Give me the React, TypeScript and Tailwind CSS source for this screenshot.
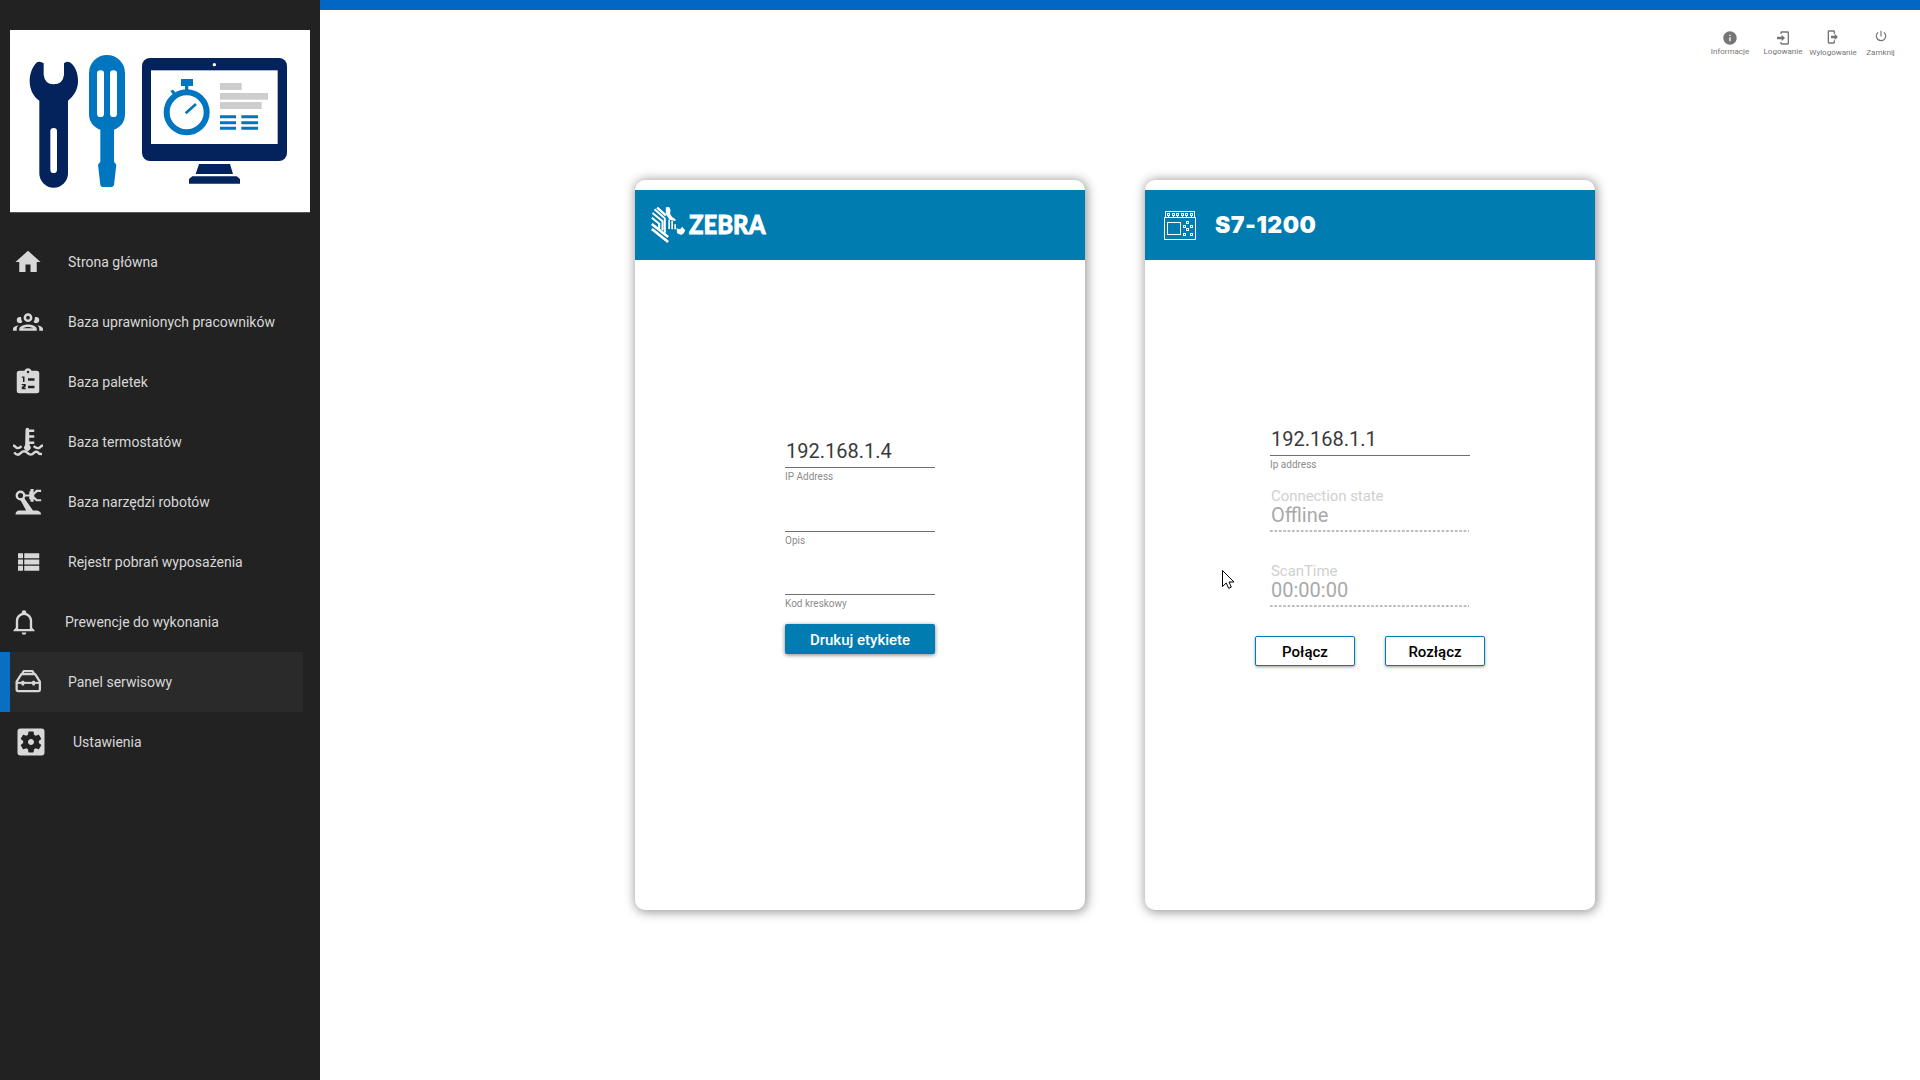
import React from "react";
import { MdSettingsApplications, MdPowerSettingsNew, MdInfo } from "react-icons/md";

const roboto = "font-['Roboto',sans-serif]";

function Logo() {
  return (
    <svg viewBox="30 90 900 546" className="block h-[182px] w-[300px] bg-white" preserveAspectRatio="none">
      <g fill="#04225c">
        <path d="M112 186Q122 183 131 190V224Q134 252 161 253Q189 252 192 224V190Q200 182 212 188C228 202 234 222 234 244C234 268 222 288 204 302V520A43 43 0 0 1 118 520V302C100 290 89 268 89 244C89 220 97 200 112 186Z" />
        <rect x="426" y="174" width="435" height="309" rx="24" />
        <path d="M597 492H690L699 522H587Z" />
        <path d="M577 529H710L720 537V551H567V537Z" />
      </g>
      <rect x="151" y="384" width="20" height="135" rx="10" fill="#fff" />
      <g fill="#0076c0">
        <path d="M267 219A54 54 0 0 1 375 219V342C375 366 362 382 342 389V485L349 494L342 555Q340 561 334 561H308Q302 561 301 555L294 494L301 485V389C281 382 267 366 267 342Z" />
      </g>
      <rect x="291" y="211" width="21" height="140" rx="10" fill="#fff" />
      <rect x="330" y="211" width="21" height="140" rx="10" fill="#fff" />
      <rect x="453" y="211" width="380" height="221" fill="#fff" />
      <circle cx="643" cy="194" r="5" fill="#fff" />
      <circle cx="560" cy="337" r="60" fill="none" stroke="#0076c0" strokeWidth="18" />
      <path d="M557 340L588 312" stroke="#0076c0" strokeWidth="8" />
      <path d="M543 237H579V258H565V272H555V258H543Z" fill="#0076c0" />
      <path d="M511 273L519 269L526 277L520 285Z" fill="#0076c0" />
      <g fill="#cdcdcd">
        <rect x="660" y="249" width="65" height="21" />
        <rect x="660" y="279" width="144" height="20" />
        <rect x="660" y="306" width="125" height="21" />
      </g>
      <path d="M660 350.500H708M660 368H708M660 385H708M724 350.500H774M724 368H774M724 385H774" stroke="#0076c0" strokeWidth="9" />
    </svg>
  );
}

function Glyph({ children, size = "size-[30px]" }: { children: React.ReactNode; size?: string }) {
  return (
    <svg viewBox="0 0 24 24" className={size} fill="currentColor">
      {children}
    </svg>
  );
}

const HomeIcon = <Glyph><path d="M10,20V14H14V20H19V12H22L12,3L2,12H5V20H10Z" /></Glyph>;
const PeopleIcon = (
  <Glyph>
    <path d="M12,5A3.500,3.500 0 0,0 8.500,8.500A3.500,3.500 0 0,0 12,12A3.500,3.500 0 0,0 15.500,8.500A3.500,3.500 0 0,0 12,5M12,7A1.500,1.500 0 0,1 13.500,8.500A1.500,1.500 0 0,1 12,10A1.500,1.500 0 0,1 10.500,8.500A1.500,1.500 0 0,1 12,7M5.500,8A2.500,2.500 0 0,0 3,10.500C3,11.440 3.530,12.250 4.290,12.680C4.650,12.880 5.060,13 5.500,13C5.940,13 6.350,12.880 6.710,12.680C7.080,12.470 7.390,12.170 7.620,11.810C6.890,10.860 6.500,9.700 6.500,8.500C6.500,8.410 6.500,8.310 6.500,8.220C6.200,8.080 5.860,8 5.500,8M18.500,8C18.140,8 17.800,8.080 17.500,8.220C17.500,8.310 17.500,8.410 17.500,8.500C17.500,9.700 17.110,10.860 16.380,11.810C16.500,12 16.630,12.150 16.780,12.300C16.940,12.450 17.100,12.580 17.290,12.680C17.650,12.880 18.060,13 18.500,13C18.940,13 19.350,12.880 19.710,12.680C20.470,12.250 21,11.440 21,10.500A2.500,2.500 0 0,0 18.500,8M12,14C9.660,14 5,15.170 5,17.500V19H19V17.500C19,15.170 14.340,14 12,14M4.710,14.550C2.780,14.780 0,15.760 0,17.500V19H3V17.070C3,16.060 3.690,15.220 4.710,14.550M19.290,14.550C20.310,15.220 21,16.060 21,17.070V19H24V17.500C24,15.760 21.220,14.780 19.290,14.550M12,16C13.530,16 15.240,16.500 16.230,17H7.770C8.760,16.500 10.470,16 12,16Z" />
  </Glyph>
);
const ClipboardIcon = (
  <Glyph>
    <path fillRule="evenodd" d="M19,3H14.820C14.400,1.840 13.300,1 12,1C10.700,1 9.600,1.840 9.180,3H5A2,2 0 0,0 3,5V19A2,2 0 0,0 5,21H19A2,2 0 0,0 21,19V5A2,2 0 0,0 19,3M12,3A1,1 0 0,1 13,4A1,1 0 0,1 12,5A1,1 0 0,1 11,4A1,1 0 0,1 12,3M7,7.500H9.200V12H8V8.600H7M12,9H17.200V11H12M7,13.500H10.200V15.800L8.800,16.700H10.200V17.800H7V15.900L9,14.600H7M12,15H17.200V17H12Z" />
  </Glyph>
);
const CoolantIcon = (
  <Glyph>
    <path d="M10 2a1.500 1.500 0 0 1 3 0H17V4H13V6.500H17V8.500H13V11.500H17V13.500H13.300V14.500A2.600 2.600 0 1 1 9.700 14.500Z" />
    <path d="M0 14.800Q1.500 15 2.500 16.400Q4.500 17.800 6.800 15.300M24 14.800Q22.500 15 21.500 16.400Q19.500 17.800 16.500 15.300M1 20.300Q3.400 23.800 6.300 20.700Q9 18 11.600 20.700Q14.200 23.500 16.700 20.700Q19 18.500 21 21.500L23.200 21.600" fill="none" stroke="currentColor" strokeWidth="1.900" />
  </Glyph>
);
const RobotIcon = (
  <Glyph>
    <circle cx="6" cy="6.800" r="3" fill="none" stroke="currentColor" strokeWidth="1.900" />
    <path d="M5.600 9.800L8.800 8.600L16 18.800H18.500Q22.300 19 22.500 22H2Q2 19 5 18.800H10.500Z" />
    <path d="M9 6H13V3.500L14 3.200V1.500H16.500V4.500L18.500 2.200H22.500V4H19.500L17 6.200V7.600L19.500 9.700H22.500V11.400H18.500L16.500 9.600V11.700H14V10L13 9.700V7.600H9Z" />
  </Glyph>
);
const ListIcon = <Glyph><path d="M9,5V9H21V5M9,19H21V15H9M9,14H21V10H9M4,9H8V5H4M4,19H8V15H4M4,14H8V10H4V14Z" /></Glyph>;
const BellIcon = (
  <Glyph size="size-[28px]">
    <path d="M10,21H14A2,2 0 0,1 12,23A2,2 0 0,1 10,21M21,19V20H3V19L5,17V11C5,7.900 7.030,5.170 10,4.290C10,4.190 10,4.100 10,4A2,2 0 0,1 12,2A2,2 0 0,1 14,4C14,4.100 14,4.190 14,4.290C16.970,5.170 19,7.900 19,11V17L21,19M17,11A5,5 0 0,0 12,6A5,5 0 0,0 7,11V18H17V11Z" />
  </Glyph>
);
const ToolboxIcon = (
  <Glyph>
    <g fill="none" stroke="currentColor" strokeWidth="1.800" strokeLinejoin="round">
      <path d="M6.700 5.700H17.700L21.500 11.700V18Q21.500 19.200 20.300 19.200H4.100Q2.900 19.200 2.900 18V11.700Z" />
      <path d="M7.200 5.600L8.600 3.200H15.600L17 5.600" strokeWidth="1.800" />
      <path d="M3 12.700H21.400" strokeWidth="1.600" />
    </g>
    <rect x="6.800" y="10.900" width="2.200" height="3.800" rx=".6" />
    <rect x="15.400" y="10.900" width="2.200" height="3.800" rx=".6" />
  </Glyph>
);

type Item = { label: string; icon: React.ReactNode; pad: string; iconBox: string; active?: boolean };
const items: Item[] = [
  { label: "Strona główna", icon: HomeIcon, pad: "pl-[13px]", iconBox: "w-[55px]" },
  { label: "Baza uprawnionych pracowników", icon: PeopleIcon, pad: "pl-[13px]", iconBox: "w-[55px]" },
  { label: "Baza paletek", icon: ClipboardIcon, pad: "pl-[13px]", iconBox: "w-[55px]" },
  { label: "Baza termostatów", icon: CoolantIcon, pad: "pl-[13px]", iconBox: "w-[55px]" },
  { label: "Baza narzędzi robotów", icon: RobotIcon, pad: "pl-[13px]", iconBox: "w-[55px]" },
  { label: "Rejestr pobrań wyposażenia", icon: ListIcon, pad: "pl-[13px]", iconBox: "w-[55px]" },
  { label: "Prewencje do wykonania", icon: BellIcon, pad: "pl-[10px]", iconBox: "w-[55px]" },
  { label: "Panel serwisowy", icon: ToolboxIcon, pad: "pl-[3px]", iconBox: "w-[55px]", active: true },
  { label: "Ustawienia", icon: <MdSettingsApplications className="size-[36px]" />, pad: "pl-[13px]", iconBox: "w-[60px]" },
];

function Sidebar() {
  return (
    <aside className="h-full w-[320px] shrink-0 bg-[#222222] pt-[30px]">
      <div className="mx-[10px] border-b border-[#555]"><Logo /></div>
      <nav className="mt-[19px]">
        {items.map((it) => (
          <div
            key={it.label}
            className={`flex h-[60px] w-[303px] items-center text-[14px] text-[#d8d8d8] ${it.pad} ${it.active ? "border-l-[10px] border-[#0a6fc4] bg-[#2a2a2a]" : ""}`}
          >
            <span className={`shrink-0 ${it.iconBox}`}>{it.icon}</span>
            <span className="whitespace-nowrap pt-px">{it.label}</span>
          </div>
        ))}
      </nav>
    </aside>
  );
}

function TopActions() {
  return (
    <div className="flex h-[50px] items-start text-[8px] leading-[10px] text-[#757575]">
      <div className="mt-[20px] flex w-[60px] flex-col items-center">
        <MdInfo className="size-[16px]" />
        <span className="mt-px">Informacje</span>
      </div>
      <div className="mt-[20px] flex w-[46px] flex-col items-center">
        <Glyph size="size-[16px]">
          <path d="M10,17V14H3V10H10V7L15,12L10,17M10,2H19A2,2 0 0,1 21,4V20A2,2 0 0,1 19,22H10A2,2 0 0,1 8,20V18H10V20H19V4H10V6H8V4A2,2 0 0,1 10,2Z" />
        </Glyph>
        <span className="mt-px">Logowanie</span>
      </div>
      <div className="mt-[19px] flex w-[54px] flex-col items-center">
        <Glyph size="size-[16px]">
          <path d="M14.500,16.500V14H9V10H14.500V7L19.500,12L14.500,16.500M13,2A2,2 0 0,1 15,4V7H13V4H6V20H13V17H15V20A2,2 0 0,1 13,22H6A2,2 0 0,1 4,20V4A2,2 0 0,1 6,2H13Z" />
        </Glyph>
        <span className="mt-[3px]">Wylogowanie</span>
      </div>
      <div className="mt-[19px] flex w-[41px] flex-col items-center">
        <MdPowerSettingsNew className="size-[14px]" />
        <span className="mt-[5px]">Zamknij</span>
      </div>
    </div>
  );
}

function ZebraHead() {
  return (
    <svg viewBox="93 123 104 114" className="ml-[16px] h-[38px] w-[35px]" fill="none" stroke="#fff" strokeWidth="6">
      <path d="M95 192L144 231M95 177L144 216" strokeWidth="8" />
      <path d="M95 158L117 176V191M97 144L127 169V196M103 133L134 160V203" strokeWidth="6" />
      <path d="M111 128L137 151" strokeWidth="7" />
      <path d="M137 127L147 126L151 135L150 147L156 156L166 163V168L148 164L137 148Z" fill="#fff" stroke="none" />
      <path d="M147 164V192M156 167V193M165 178V193" strokeWidth="5" />
      <path d="M169 190L180 193L186 185L195 196L191 205L183 210L171 205Z" fill="#fff" stroke="none" />
    </svg>
  );
}

function PlcIcon() {
  return (
    <svg viewBox="0 0 32 29" className="ml-[19px] h-[29px] w-[32px]" fill="none" stroke="#fff">
      <path d="M1.500 6.500V.5H30.500V6.500M.5 6.500H31.500V28.500H.5Z" />
      <rect x="3.500" y="11.500" width="13" height="12" />
      <path d="M4.500 2V5M9.500 2V5M13.500 2V5M18.500 2V5M22.500 2V5M27.500 2V5" strokeWidth="3" />
      <path d="M4.500 3V4M9.500 3V4M13.500 3V4M18.500 3V4M22.500 3V4M27.500 3V4" stroke="#007cb0" />
      <path d="M4.500 4V6M9.500 4V6M13.500 4V6M18.500 4V6M22.500 4V6M27.500 4V6" />
      <g>
        <rect x="22.500" y="10.500" width="2" height="2" />
        <rect x="19.500" y="14.500" width="2" height="2" />
        <rect x="26.500" y="14.500" width="2" height="2" />
        <rect x="22.500" y="17.500" width="2" height="2" />
        <rect x="19.500" y="22.500" width="2" height="2" />
        <rect x="26.500" y="22.500" width="2" height="2" />
      </g>
    </svg>
  );
}

function Card({ header, children }: { header: React.ReactNode; children: React.ReactNode }) {
  return (
    <section className="flex h-[730px] w-[450px] flex-col overflow-hidden rounded-[10px] bg-white pt-[10px] shadow-[1px_1px_11px_1px_rgba(0,0,0,0.42)]">
      <header className="flex h-[70px] shrink-0 items-center bg-[#007cb0] text-white">{header}</header>
      {children}
    </section>
  );
}

function Field({ value, label, box }: { value?: string; label: string; box: string }) {
  return (
    <div className={box}>
      <div className="h-[30px] border-b border-[#707070] pl-[1px] text-[20px] leading-[27px] text-[#3a3a3a]">{value}</div>
      <div className="text-[10px] leading-[18px] text-[#8c8c8c]">{label}</div>
    </div>
  );
}

function ReadOnly({ label, value }: { label: string; value: string }) {
  return (
    <div className="h-[75px] w-[200px]">
      <div className="pl-[1px] text-[15px] leading-[18px] tracking-[-0.06px] text-[#d0d0d0]">{label}</div>
      <div className="pl-[1px] text-[20px] leading-[20px] text-[#a9a9a9]">{value}</div>
      <svg className="mt-[5px] block h-[2px] w-[199px]" viewBox="0 0 199 2">
        <path d="M0 1H199" stroke="#a8a8a8" strokeWidth="1.500" strokeDasharray="2.700 1.700" />
      </svg>
    </div>
  );
}

export default function App() {
  return (
    <div className={`relative flex h-[1080px] w-[1920px] overflow-hidden bg-white ${roboto}`}>
      <Sidebar />
      <main className="flex flex-1 flex-col">
        <div className="h-[10px] bg-[#0068c4]" />
        <div className="flex justify-end pr-[19px]"><TopActions /></div>
        <div className="mt-[120px] flex gap-[60px] pl-[315px]">
          <Card
            header={
              <>
                <ZebraHead />
                <span className="-mt-[2px] ml-[3px] origin-left scale-x-[0.92] font-['Lato',sans-serif] text-[26px] font-black leading-none [-webkit-text-stroke:0.8px_white]">ZEBRA</span>
              </>
            }
          >
            <div className="flex flex-col items-center pt-[178px]">
              <Field value="192.168.1.4" label="IP Address" box="h-[64px] w-[150px]" />
              <Field label="Opis" box="h-[63px] w-[150px]" />
              <Field label="Kod kreskowy" box="h-[59px] w-[150px]" />
              <button className="h-[30px] w-[150px] rounded-[2px] bg-[#007cb0] pt-[2px] text-[15px] font-medium text-white shadow-[0_1px_4px_rgba(0,0,0,0.5)]">
                Drukuj etykiete
              </button>
            </div>
          </Card>
          <Card
            header={
              <>
                <PlcIcon />
                <span className="ml-[19px] font-['Inter',sans-serif] text-[23px] font-black leading-none tracking-[0.5px]">S7-1200</span>
              </>
            }
          >
            <div className="flex flex-col items-center pt-[166px]">
              <Field value="192.168.1.1" label="Ip address" box="h-[61px] w-[200px]" />
              <ReadOnly label="Connection state" value="Offline" />
              <ReadOnly label="ScanTime" value="00:00:00" />
              <div className="-mt-px flex gap-[30px]">
                {["Połącz", "Rozłącz"].map((t) => (
                  <button key={t} className="h-[30px] w-[100px] rounded-[2px] border border-[#007cb0] bg-white pt-[2px] text-[15px] font-medium text-black shadow-[0_1px_3px_rgba(0,0,0,0.4)]">
                    {t}
                  </button>
                ))}
              </div>
            </div>
          </Card>
        </div>
      </main>
      <svg className="absolute left-[1222px] top-[569px] h-[20px] w-[13px]" viewBox="0 0 13 20">
        <path d="M.5 1.500V17.500L4.200 14L6.700 19.300L9.300 18.100L7 13H12Z" fill="#fff" stroke="#000" />
      </svg>
    </div>
  );
}
